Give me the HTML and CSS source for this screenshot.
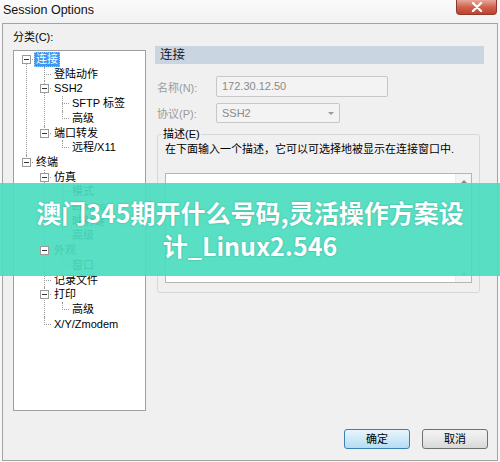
FILE: index.html
```html
<!DOCTYPE html>
<html lang="zh-CN">

<head>
    <meta charset="UTF-8">
    <meta name="viewport" content="width=device-width, initial-scale=1.0">
    <title>Session Options</title>
    <link rel="stylesheet" href="styles.css">
</head>

<body>
    <div class="ventana">
        <div class="barra-titulo">
            <span class="titulo">Session Options</span>
            <div class="cerrar">
                <svg width="12" height="10" viewBox="0 0 12 10">
                    <path d="M2 1 L10 9 M10 1 L2 9" stroke="#fff" stroke-width="2.4" stroke-linecap="round" fill="none" />
                </svg>
            </div>
        </div>

        <div class="cliente">
            <div class="principal">
                <!-- columna izquierda: categorias -->
                <div class="columna-izq">
                    <div class="etiqueta">分类(C):</div>
                    <div class="caja-arbol">
                        <ul class="arbol">
                            <li><span class="caja"></span><span class="nodo activo">连接</span>
                                <ul>
                                    <li><span class="nodo">登陆动作</span></li>
                                    <li><span class="caja"></span><span class="nodo">SSH2</span>
                                        <ul>
                                            <li><span class="nodo">SFTP 标签</span></li>
                                            <li><span class="nodo">高级</span></li>
                                        </ul>
                                    </li>
                                    <li><span class="caja"></span><span class="nodo">端口转发</span>
                                        <ul>
                                            <li><span class="nodo">远程/X11</span></li>
                                        </ul>
                                    </li>
                                </ul>
                            </li>
                            <li><span class="caja"></span><span class="nodo">终端</span>
                                <ul>
                                    <li><span class="caja"></span><span class="nodo">仿真</span>
                                        <ul>
                                            <li><span class="nodo">模式</span></li>
                                            <li><span class="nodo">Emacs</span></li>
                                            <li><span class="nodo">映射键</span></li>
                                            <li><span class="nodo">高级</span></li>
                                        </ul>
                                    </li>
                                    <li><span class="caja"></span><span class="nodo">外观</span>
                                        <ul>
                                            <li><span class="nodo">窗口</span></li>
                                        </ul>
                                    </li>
                                    <li><span class="nodo">记录文件</span></li>
                                    <li><span class="caja"></span><span class="nodo">打印</span>
                                        <ul>
                                            <li><span class="nodo">高级</span></li>
                                        </ul>
                                    </li>
                                    <li><span class="nodo">X/Y/Zmodem</span></li>
                                </ul>
                            </li>
                        </ul>
                    </div>
                </div>

                <!-- columna derecha: opciones de la conexion -->
                <div class="columna-der">
                    <div class="cabecera">连接</div>
                    <div class="fila fila-primera">
                        <label class="campo-etiqueta">名称(N):</label>
                        <div class="entrada">172.30.12.50</div>
                    </div>
                    <div class="fila">
                        <label class="campo-etiqueta">协议(P):</label>
                        <div class="selector">SSH2<span class="flecha"></span></div>
                    </div>
                    <fieldset class="grupo">
                        <legend>描述(E)</legend>
                        <div class="ayuda">在下面输入一个描述，它可以可选择地被显示在连接窗口中.</div>
                        <div class="texto">
                            <div class="scroll">
                                <span class="flecha-arriba"></span>
                                <span class="flecha-abajo"></span>
                            </div>
                        </div>
                    </fieldset>
                </div>
            </div>

            <div class="botones">
                <div class="boton boton-ok">确定</div>
                <div class="boton">取消</div>
            </div>
        </div>

        <div class="aviso">澳门345期开什么号码,灵活操作方案设计_Linux2.546</div>
    </div>
</body>

</html>
```

FILE: styles.css
```css
body {
    margin: 0;
    background-color: #f6f7f8;
    font-family: "Liberation Sans", "Noto Sans CJK SC", sans-serif;
    font-size: 11px;
    color: #000;
}

.ventana {
    position: relative;
    width: 500px;
    height: 462px;
    overflow: hidden;
}

.barra-titulo {
    height: 23px;
    display: flex;
    justify-content: space-between;
    align-items: flex-start;
    background: linear-gradient(#fbfbfc, #f1f2f3);
}

.titulo {
    font-family: "Liberation Sans", sans-serif;
    font-size: 12.5px;
    padding: 3px 0 0 3px;
    color: #111;
}

.cerrar {
    width: 39px;
    height: 14px;
    margin-right: 3px;
    border: 1px solid #8c3a30;
    border-top: none;
    border-radius: 0 0 4px 4px;
    background: linear-gradient(#e8a89a, #d0624f 50%, #c0412e);
    display: flex;
    justify-content: center;
    align-items: center;
}

.cliente {
    margin-left: 2px;
    width: 494px;
    height: 436px;
    border: 1px solid #a3a3a3;
    background-color: #f0f0f0;
    display: flex;
    flex-direction: column;
}

.principal {
    display: grid;
    grid-template-columns: 133px 329px;
    column-gap: 9px;
    padding-left: 10px;
}

/* arbol de categorias */
.etiqueta {
    line-height: 14px;
    padding-top: 6px;
    margin-bottom: 6px;
}

.caja-arbol {
    height: 359px;
    border: 1px solid #a0a0a0;
    background-color: #fff;
}

.arbol,
.arbol ul {
    list-style: none;
    margin: 0;
}

.arbol {
    padding: 1px 0 0 20px;
}

.arbol ul {
    padding-left: 18px;
}

.arbol li {
    position: relative;
    line-height: 14.7px;
}

.arbol li::before {
    content: "";
    position: absolute;
    left: -8px;
    top: 7px;
    width: 7px;
    border-top: 1px dotted #9a9a9a;
}

.arbol li::after {
    content: "";
    position: absolute;
    left: -8px;
    top: 0;
    height: 100%;
    border-left: 1px dotted #9a9a9a;
}

.arbol li:last-child::after {
    height: 8px;
}

.arbol > li:first-child::after {
    top: 7px;
    height: calc(100% - 7px);
}

.nodo {
    display: inline-block;
    height: 14.7px;
    padding: 0 2px;
    white-space: nowrap;
}

.nodo.activo {
    background-color: #3d96ef;
    color: #fff;
    outline: 1px dotted #9cc8f2;
    outline-offset: -1px;
}

.caja {
    position: absolute;
    z-index: 1;
    left: -12px;
    top: 3px;
    width: 7px;
    height: 7px;
    border: 1px solid #9a9a9a;
    background-color: #fff;
}

.caja::before {
    content: "";
    position: absolute;
    left: 1px;
    top: 3px;
    width: 5px;
    height: 1px;
    background-color: #333;
}

/* panel derecho */
.columna-der {
    padding-top: 22px;
}

.cabecera {
    height: 18px;
    line-height: 18px;
    padding-left: 5px;
    font-size: 12.5px;
    background-color: #c9d5e1;
    color: #1a1a1a;
}

.fila {
    display: flex;
    align-items: center;
    padding-left: 2px;
    margin-top: 6px;
}

.fila-primera {
    margin-top: 12px;
}

.campo-etiqueta {
    width: 59px;
    color: #9b9b9b;
}

.entrada,
.selector {
    position: relative;
    box-sizing: border-box;
    border: 1px solid #c7c7c7;
    border-radius: 2px;
    background-color: #f3f3f3;
    color: #8a8a8a;
    padding-left: 5px;
}

.entrada {
    width: 172px;
    height: 21px;
    line-height: 19px;
}

.selector {
    width: 124px;
    height: 20px;
    line-height: 18px;
}

.flecha {
    position: absolute;
    right: 5px;
    top: 8px;
    border-left: 3px solid transparent;
    border-right: 3px solid transparent;
    border-top: 3px solid #9a9a9a;
}

.grupo {
    margin: 4px 0 0 2px;
    width: 323px;
    box-sizing: border-box;
    padding: 0 7px 9px 7px;
    border: 1px solid #d3d8dc;
    border-radius: 3px;
    min-inline-size: 0;
}

.grupo legend {
    padding: 0 1px;
    margin-left: -3px;
    line-height: 14px;
}

.ayuda {
    line-height: 14px;
    padding-top: 1px;
}

.texto {
    margin-top: 17px;
    height: 110px;
    box-sizing: border-box;
    border: 1px solid #b5b5b5;
    background-color: #fff;
    display: flex;
    justify-content: flex-end;
}

.scroll {
    width: 15px;
    background-color: #f4f4f4;
    border-left: 1px solid #ececec;
    display: flex;
    flex-direction: column;
    justify-content: space-between;
    align-items: center;
    padding: 6px 0;
}

.flecha-arriba {
    border-left: 3px solid transparent;
    border-right: 3px solid transparent;
    border-bottom: 3px solid #8a8a8a;
}

.flecha-abajo {
    border-left: 3px solid transparent;
    border-right: 3px solid transparent;
    border-top: 3px solid #8a8a8a;
}

/* botones */
.botones {
    margin-top: auto;
    display: flex;
    justify-content: flex-end;
    gap: 12px;
    padding: 0 9px 11px 0;
}

.boton {
    width: 64px;
    height: 18px;
    line-height: 18px;
    text-align: center;
    border: 1px solid #707070;
    border-radius: 3px;
    background: linear-gradient(#f3f3f3, #e8e8e8 50%, #d8d8d8);
}

.boton-ok {
    border-color: #3c7fb1;
    background: linear-gradient(#e8f5fd, #cfe9f8 50%, #b4dcf3);
}

/* banner superpuesto */
.aviso {
    position: absolute;
    left: 0;
    top: 183px;
    width: 500px;
    height: 93px;
    box-sizing: border-box;
    padding: 13px 30px 0;
    background-color: rgba(74, 220, 191, 0.92);
    color: #fff;
    font-family: "Noto Sans CJK SC", sans-serif;
    font-weight: bold;
    font-size: 25px;
    line-height: 33px;
    text-align: center;
    text-shadow: 0 0 2px rgba(0, 80, 60, 0.35);
}
```
